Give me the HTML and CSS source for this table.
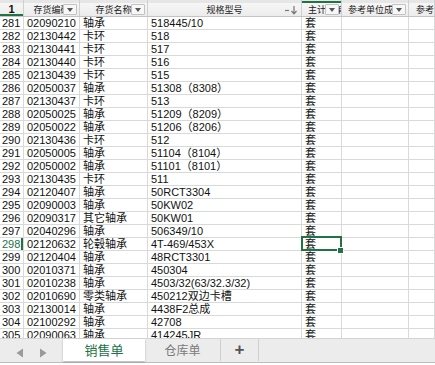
FILE: index.html
```html
<!DOCTYPE html>
<html lang="zh">
<head>
<meta charset="utf-8">
<link rel="stylesheet" href="styles.css">
</head>
<body>
<div class="sheet">
  <div class="strip">
    <div class="sc"></div><div class="sc"></div><div class="sc"></div><div class="sc"></div><div class="sc sc-sel"></div><div class="sc"></div><div class="sc"></div>
  </div>
  <div class="head">
    <div class="hc hc-num">1</div>
    <div class="hc"><span class="hl">存货编码</span><span class="dd"></span></div>
    <div class="hc"><span class="hl">存货名称</span><span class="dd"></span></div>
    <div class="hc"><span class="hl">规格型号</span><span class="sort"><svg width="14" height="10" viewBox="0 0 14 10"><path d="M1 5.5h4" stroke="#777" stroke-width="1.2"/><path d="M10 1v7.5M7.5 6l2.5 2.8L12.5 6" stroke="#777" stroke-width="1.2" fill="none"/></svg></span></div>
    <div class="hc hc-left"><span class="hl">主计量单位</span><span class="dd"></span></div>
    <div class="hc"><span class="hl">参考单位成本</span><span class="dd"></span></div>
    <div class="hc hc-left2"><span class="hl">参考售价</span></div>
  </div>
  <div class="rows">
    <div class="row"><div class="c n">281</div><div class="c">02090210</div><div class="c">轴承</div><div class="c">518445/10</div><div class="c">套</div><div class="c"></div><div class="c"></div></div>
    <div class="row"><div class="c n">282</div><div class="c">02130442</div><div class="c">卡环</div><div class="c">518</div><div class="c">套</div><div class="c"></div><div class="c"></div></div>
    <div class="row"><div class="c n">283</div><div class="c">02130441</div><div class="c">卡环</div><div class="c">517</div><div class="c">套</div><div class="c"></div><div class="c"></div></div>
    <div class="row"><div class="c n">284</div><div class="c">02130440</div><div class="c">卡环</div><div class="c">516</div><div class="c">套</div><div class="c"></div><div class="c"></div></div>
    <div class="row"><div class="c n">285</div><div class="c">02130439</div><div class="c">卡环</div><div class="c">515</div><div class="c">套</div><div class="c"></div><div class="c"></div></div>
    <div class="row"><div class="c n">286</div><div class="c">02050037</div><div class="c">轴承</div><div class="c">51308（8308）</div><div class="c">套</div><div class="c"></div><div class="c"></div></div>
    <div class="row"><div class="c n">287</div><div class="c">02130437</div><div class="c">卡环</div><div class="c">513</div><div class="c">套</div><div class="c"></div><div class="c"></div></div>
    <div class="row"><div class="c n">288</div><div class="c">02050025</div><div class="c">轴承</div><div class="c">51209（8209）</div><div class="c">套</div><div class="c"></div><div class="c"></div></div>
    <div class="row"><div class="c n">289</div><div class="c">02050022</div><div class="c">轴承</div><div class="c">51206（8206）</div><div class="c">套</div><div class="c"></div><div class="c"></div></div>
    <div class="row"><div class="c n">290</div><div class="c">02130436</div><div class="c">卡环</div><div class="c">512</div><div class="c">套</div><div class="c"></div><div class="c"></div></div>
    <div class="row"><div class="c n">291</div><div class="c">02050005</div><div class="c">轴承</div><div class="c">51104（8104）</div><div class="c">套</div><div class="c"></div><div class="c"></div></div>
    <div class="row"><div class="c n">292</div><div class="c">02050002</div><div class="c">轴承</div><div class="c">51101（8101）</div><div class="c">套</div><div class="c"></div><div class="c"></div></div>
    <div class="row"><div class="c n">293</div><div class="c">02130435</div><div class="c">卡环</div><div class="c">511</div><div class="c">套</div><div class="c"></div><div class="c"></div></div>
    <div class="row"><div class="c n">294</div><div class="c">02120407</div><div class="c">轴承</div><div class="c">50RCT3304</div><div class="c">套</div><div class="c"></div><div class="c"></div></div>
    <div class="row"><div class="c n">295</div><div class="c">02090003</div><div class="c">轴承</div><div class="c">50KW02</div><div class="c">套</div><div class="c"></div><div class="c"></div></div>
    <div class="row"><div class="c n">296</div><div class="c">02090317</div><div class="c">其它轴承</div><div class="c">50KW01</div><div class="c">套</div><div class="c"></div><div class="c"></div></div>
    <div class="row"><div class="c n">297</div><div class="c">02040296</div><div class="c">轴承</div><div class="c">506349/10</div><div class="c">套</div><div class="c"></div><div class="c"></div></div>
    <div class="row"><div class="c n n-sel">298</div><div class="c">02120632</div><div class="c">轮毂轴承</div><div class="c">4T-469/453X</div><div class="c c-sel">套</div><div class="c"></div><div class="c"></div></div>
    <div class="row"><div class="c n">299</div><div class="c">02120404</div><div class="c">轴承</div><div class="c">48RCT3301</div><div class="c">套</div><div class="c"></div><div class="c"></div></div>
    <div class="row"><div class="c n">300</div><div class="c">02010371</div><div class="c">轴承</div><div class="c">450304</div><div class="c">套</div><div class="c"></div><div class="c"></div></div>
    <div class="row"><div class="c n">301</div><div class="c">02010238</div><div class="c">轴承</div><div class="c">4503/32(63/32.3/32)</div><div class="c">套</div><div class="c"></div><div class="c"></div></div>
    <div class="row"><div class="c n">302</div><div class="c">02010690</div><div class="c">零类轴承</div><div class="c">450212双边卡槽</div><div class="c">套</div><div class="c"></div><div class="c"></div></div>
    <div class="row"><div class="c n">303</div><div class="c">02130014</div><div class="c">轴承</div><div class="c">4438F2总成</div><div class="c">套</div><div class="c"></div><div class="c"></div></div>
    <div class="row"><div class="c n">304</div><div class="c">02100292</div><div class="c">轴承</div><div class="c">42708</div><div class="c">套</div><div class="c"></div><div class="c"></div></div>
    <div class="row"><div class="c n">305</div><div class="c">02090063</div><div class="c">轴承</div><div class="c">414245JR</div><div class="c">套</div><div class="c"></div><div class="c"></div></div>
  </div>
</div>
<div class="tabbar">
  <div class="arrows">
    <svg width="8" height="10" viewBox="0 0 8 10"><path d="M7 0.5v9L0.5 5z" fill="#9a9a9a"/></svg>
    <svg width="8" height="10" viewBox="0 0 8 10"><path d="M1 0.5v9L7.5 5z" fill="#9a9a9a"/></svg>
  </div>
  <div class="tab tab-active">销售单</div>
  <div class="tab">仓库单</div>
  <div class="tab tab-add">+</div>
</div>
</body>
</html>
```

FILE: styles.css
```css
* { box-sizing: border-box; }
html, body { margin: 0; padding: 0; }
body {
  width: 435px;
  height: 365px;
  overflow: hidden;
  background: #ffffff;
  font-family: "Liberation Sans", "Noto Sans CJK SC", sans-serif;
  color: #111;
}
.sheet { height: 338px; overflow: hidden; }

.strip, .head, .row {
  display: grid;
  grid-template-columns: 24px 56px 68px 154px 40px 67px 26px;
}
.strip { height: 3px; background: #e6e6e6; }
.sc { border-right: 1px solid #cfcfcf; }
.sc-sel { box-shadow: inset 0 -2px 0 #217346; }

.head {
  height: 14px;
  background: linear-gradient(#f6f6f6, #ececec);
  border-bottom: 1px solid #c4c4c4;
}
.hc {
  position: relative;
  border-right: 1px solid #d0d0d0;
  font-family: "Noto Sans CJK SC", sans-serif;
  font-size: 9px;
  line-height: 13px;
  color: #222;
  white-space: nowrap;
  overflow: hidden;
  display: flex;
  justify-content: center;
}
.hl { display: block; }
.hc-num {
  font-family: "Liberation Sans", sans-serif;
  font-weight: bold;
  font-size: 11px;
  line-height: 13px;
  color: #111;
  box-shadow: inset 0 -2px 0 #217346;
}
.hc-left { justify-content: flex-start; padding-left: 6px; }
.hc-left2 { justify-content: flex-start; padding-left: 7px; }
.dd {
  position: absolute;
  right: 2px;
  top: 1px;
  width: 14px;
  height: 11px;
  background: #f7f7f7;
  border: 1px solid #c2c2c2;
  border-radius: 1px;
}
.dd::after {
  content: "";
  position: absolute;
  left: 3px;
  top: 3px;
  border-left: 3.5px solid transparent;
  border-right: 3.5px solid transparent;
  border-top: 4px solid #555;
}
.sort {
  position: absolute;
  right: 3px;
  top: 2px;
  width: 14px;
  height: 10px;
  display: flex;
}

.row { height: 13px; }
.c {
  border-right: 1px solid #d9d9d9;
  border-bottom: 1px solid #d9d9d9;
  font-size: 11px;
  line-height: 12px;
  padding-left: 3px;
  white-space: nowrap;
  overflow: hidden;
  position: relative;
}
.n { padding-left: 2px; }
.n-sel { color: #217346; box-shadow: inset -2px 0 0 #217346; }
.c-sel { overflow: visible; z-index: 2; }
.c-sel::after {
  content: "";
  position: absolute;
  left: -1px;
  top: -2px;
  right: -1px;
  bottom: -1px;
  border: 2px solid #217346;
}
.c-sel::before {
  content: "";
  position: absolute;
  right: -3px;
  bottom: -4px;
  width: 5px;
  height: 5px;
  background: #217346;
  border: 1px solid #fff;
  z-index: 3;
}

.tabbar {
  height: 27px;
  background: #ececec;
  border-top: 1px solid #d4d4d4;
  border-bottom: 2px solid #ffffff;
  box-shadow: inset 0 -1px 0 #bcbcbc;
  display: flex;
  align-items: flex-start;
}
.arrows {
  width: 63px;
  display: flex;
  gap: 15px;
  padding-left: 16px;
  padding-top: 9px;
}
.tab {
  height: 22px;
  font-family: "Noto Sans CJK SC", sans-serif;
  font-size: 12px;
  line-height: 21px;
  color: #7a7a7a;
  text-align: center;
  width: 76px;
  border-right: 1px solid #cfcfcf;
  margin-top: 0;
}
.tab-active {
  width: 82px;
  background: #ffffff;
  color: #217346;
  font-size: 13px;
  border-right: none;
  box-shadow: 0 1px 2px rgba(0,0,0,0.25);
}
.tab-add {
  width: 38px;
  font-family: "Liberation Sans", sans-serif;
  font-size: 17px;
  font-weight: bold;
  color: #555;
  border-right: 1px solid #cfcfcf;
}
```
